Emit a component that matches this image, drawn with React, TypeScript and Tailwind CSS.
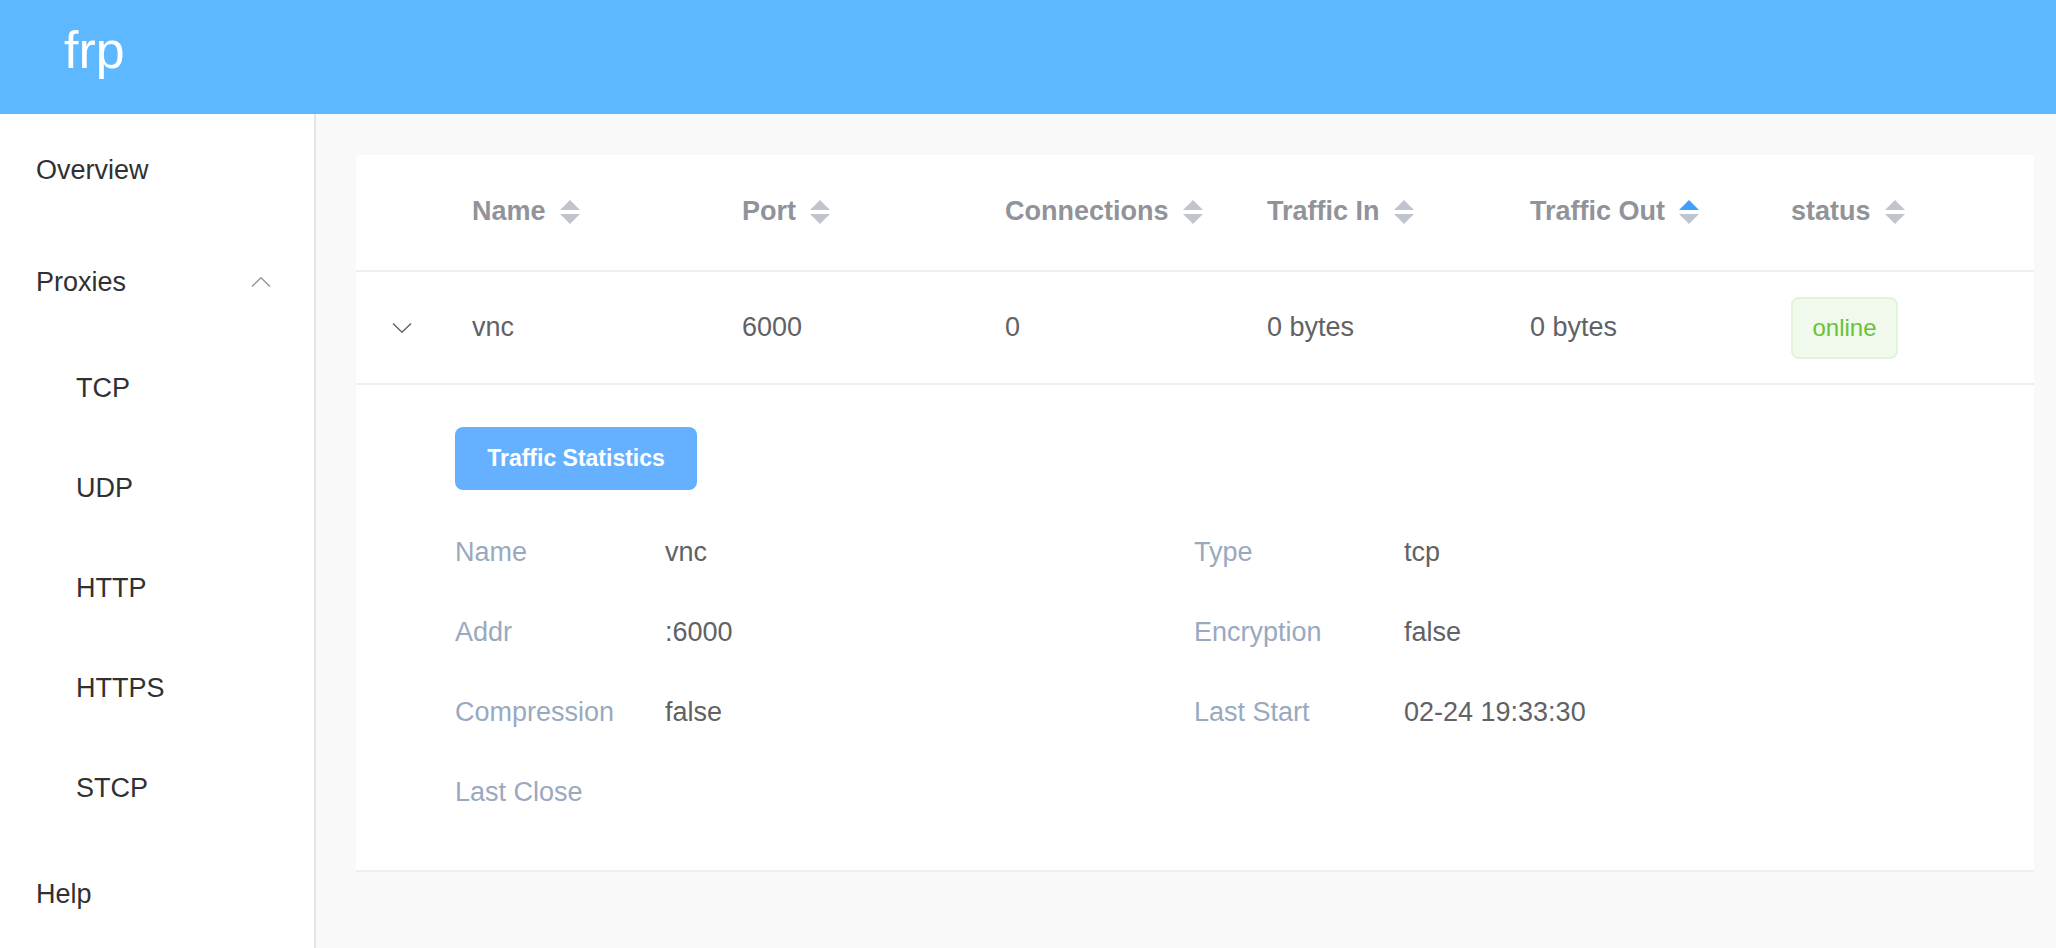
const font = { fontFamily: '"Liberation Sans", Arial, sans-serif' }

function SortIcon({ active = false }: { active?: boolean }) {
  return (
    <svg width="20" height="24" viewBox="0 0 20 24" className="ml-[14px] shrink-0">
      <polygon points="10,0 20,10 0,10" fill={active ? '#409eff' : '#c0c4cc'} />
      <polygon points="0,14 20,14 10,24" fill="#c0c4cc" />
    </svg>
  )
}

function Chevron({ up = false, color }: { up?: boolean; color: string }) {
  return (
    <svg width="20" height="10" viewBox="0 0 20 10" className="shrink-0">
      <polyline
        points={up ? '1,9.5 10,0.8 19,9.5' : '1,0.5 10,9.2 19,0.5'}
        fill="none"
        stroke={color}
        strokeWidth="1.4"
      />
    </svg>
  )
}

const columns = [
  { title: 'Name', value: 'vnc' },
  { title: 'Port', value: '6000' },
  { title: 'Connections', value: '0' },
  { title: 'Traffic In', value: '0 bytes' },
  { title: 'Traffic Out', value: '0 bytes', active: true },
]

const details = [
  ['Name', 'vnc'],
  ['Type', 'tcp'],
  ['Addr', ':6000'],
  ['Encryption', 'false'],
  ['Compression', 'false'],
  ['Last Start', '02-24 19:33:30'],
  ['Last Close', ''],
]

function Sidebar() {
  return (
    <aside className="w-[316px] shrink-0 border-r-2 border-[#e6e6e6] bg-white text-[27px] text-[#303133]">
      <div className="flex h-[112px] items-center pl-[36px]">Overview</div>
      <div className="flex h-[112px] items-center justify-between pl-[36px] pr-[43px]">
        <span>Proxies</span>
        <Chevron up color="#909399" />
      </div>
      {['TCP', 'UDP', 'HTTP', 'HTTPS', 'STCP'].map((item) => (
        <div key={item} className="flex h-[100px] items-center pl-[76px]">
          {item}
        </div>
      ))}
      <div className="flex h-[112px] items-center pl-[36px]">Help</div>
    </aside>
  )
}

function ProxyTable() {
  return (
    <div className="bg-white">
      <div className="grid h-[117px] grid-cols-[96px_270px_263px_262px_263px_261px_1fr] items-center border-b-2 border-[#ebeef5] pb-[2px] text-[27px] font-bold text-[#909399]">
        <div />
        {columns.map((col) => (
          <div key={col.title} className="flex items-center pl-[20px]">
            {col.title}
            <SortIcon active={col.active} />
          </div>
        ))}
        <div className="flex items-center pl-[20px]">
          status
          <SortIcon />
        </div>
      </div>

      <div className="grid h-[113px] grid-cols-[96px_270px_263px_262px_263px_261px_1fr] items-center border-b-2 border-[#ebeef5] text-[27px] text-[#606266]">
        <div className="pl-[36px]">
          <Chevron color="#606266" />
        </div>
        {columns.map((col) => (
          <div key={col.title} className="pl-[20px]">
            {col.value}
          </div>
        ))}
        <div className="pl-[20px]">
          <span className="flex h-[62px] w-[107px] items-center justify-center rounded-[8px] border-2 border-[#e1f3d8] bg-[#f0f9eb] text-[24px] text-[#67c23a]">
            online
          </span>
        </div>
      </div>

      <div className="border-b-2 border-[#ebeef5] pb-[38px] pl-[99px] pt-[42px]">
        <button className="h-[63px] w-[242px] rounded-[8px] bg-[#66b1ff] text-[23px] font-bold text-white">
          Traffic Statistics
        </button>
        <div className="mt-[22px] grid grid-cols-[739px_1fr]">
          {details.map(([label, value]) => (
            <div key={label} className="flex h-[80px] items-center text-[27px]">
              <span className="w-[210px] shrink-0 text-[#99a9bf]">{label}</span>
              <span className="text-[#606266]">{value}</span>
            </div>
          ))}
        </div>
      </div>
    </div>
  )
}

export default function App() {
  return (
    <div className="flex h-screen flex-col overflow-hidden" style={font}>
      <header className="flex h-[114px] shrink-0 items-center bg-[#5eb8ff] pb-[14px] pl-[64px] text-[52px] text-white">
        frp
      </header>
      <div className="flex flex-1">
        <Sidebar />
        <main className="flex-1 bg-[#f9f9f9] pl-[40px] pr-[22px] pt-[41px]">
          <ProxyTable />
        </main>
      </div>
    </div>
  )
}
